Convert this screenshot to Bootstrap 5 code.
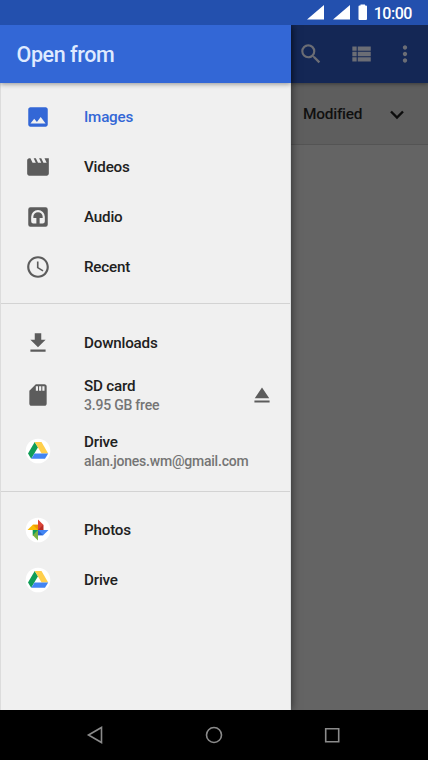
<!DOCTYPE html>
<html lang="en">
<head>
<meta charset="utf-8">
<meta name="viewport" content="width=device-width, initial-scale=1">
<title>Open from</title>
<link href="https://cdn.jsdelivr.net/npm/bootstrap@5.3.0/dist/css/bootstrap.min.css" rel="stylesheet">
<style>
body{font-family:Roboto,"Liberation Sans",sans-serif;color:#212121;background:#000}
.screen{width:428px;height:760px}
.statusbar{height:25px;background:#2350ae;color:#fff;font-size:16px;letter-spacing:-.45px;font-weight:500;padding-right:16px}
.clock{padding-top:2px}
.drawer{width:291px;background:#f0f0f0;box-shadow:0 0 9px rgba(0,0,0,.6);z-index:2;border-right:1px solid #dcdfe0}
.drawer-title{height:58px;width:291px;background:#3367d6;color:#dfeaff;font-size:21.500px;letter-spacing:-.42px;font-weight:500;padding-left:16.5px;padding-top:2px;box-shadow:0 1px 5px rgba(0,0,0,.4);z-index:1}
.drawer-body{border-left:1px solid #dcdcdc}
.entries{padding:9px 0 11px}
.entries+.entries{border-top:1px solid #d3d3d3;padding-top:14px;padding-bottom:12px}
.entries+.entries+.entries{padding-top:13px}
.entry{height:50px;padding-left:24px;font-size:15.2px;letter-spacing:-.2px;font-weight:500;line-height:20px;color:#212121}
.entry.short{height:49px}
.entry.tall{height:56px}
.entry.chosen{color:#3367d6}
.entry.chosen .glyph{fill:#3367d6}
.glyph{width:26px;height:26px;fill:#5c5c5c;margin-right:33px;flex:none}
.detail{font-size:14px;letter-spacing:-.22px;font-weight:500;line-height:19px;color:#757575}
.eject{width:26px;height:26px;fill:#5c5c5c;margin-right:15px}
.backdrop-bar{height:58px;background:#142755;box-shadow:0 1px 4px rgba(0,0,0,.4);z-index:1;padding-left:7px}
.backdrop-bar svg{fill:#6b6d75}
.overflow-dots{margin-left:17px}
.sortbar{height:62px;background:#5e5e5e;border-bottom:1px solid #545454;font-size:15.4px;letter-spacing:-.22px;font-weight:500;color:#101010;padding-left:12px;padding-top:3px}
.behind{background:#646464}
.navkeys{height:50px;background:#000}
.navkeys svg{fill:none;stroke:#8b8b8b;stroke-width:1.6}
</style>
<script src="https://cdn.jsdelivr.net/npm/bootstrap@5.3.0/dist/js/bootstrap.bundle.min.js"></script>
</head>
<body class="overflow-hidden">
<svg class="d-none">
<symbol id="drive" viewBox="0 0 26 26"><circle cx="13" cy="13" r="12.3" fill="#fff"/><path fill="#109d58" d="M9.7 4L3 15.600l3.200 5.100L13 9.300z"/><path fill="#ffcf4b" d="M9.700 4h6.800l6.700 11.400h-6.600z"/><path fill="#4285f4" d="M6.200 20.700l3.400-5.300h13.600l-3.200 5.300z"/></symbol>
</svg>
<div class="screen d-flex flex-column overflow-hidden">
  <div class="statusbar d-flex align-items-center justify-content-end">
    <svg width="63" height="25" viewBox="0 0 63 25" fill="#fff"><path d="M0 19.500L17 5v14.500zM26 19.500L43 5v14.500zM51.500 6.500a1 1 0 0 1 1-1h1V4.500h4.500v1h1a1 1 0 0 1 1 1V19a1 1 0 0 1-1 1H52.500a1 1 0 0 1-1-1z"/></svg>
    <span class="clock ms-1 lh-1">10:00</span>
  </div>
  <main class="d-flex flex-grow-1 overflow-hidden">
    <aside class="drawer d-flex flex-column position-relative flex-shrink-0">
      <header class="drawer-title d-flex align-items-center position-relative">Open from</header>
      <div class="drawer-body flex-grow-1">
        <div class="entries">
          <div class="entry chosen d-flex align-items-center"><svg class="glyph" viewBox="0 0 24 24"><path d="M21 19V5c0-1.100-.9-2-2-2H5c-1.100 0-2 .9-2 2v14c0 1.100.9 2 2 2h14c1.100 0 2-.9 2-2zM8.500 13.500l2.500 3.010L14.500 12l4.500 6H5l3.500-4.500z"/></svg>Images</div>
          <div class="entry d-flex align-items-center"><svg class="glyph" viewBox="0 0 24 24"><path d="M18 4l2 4h-3l-2-4h-2l2 4h-3l-2-4H8l2 4H7L5 4H4c-1.100 0-2 .9-2 2v12c0 1.100.9 2 2 2h16c1.100 0 2-.9 2-2V4h-4z"/></svg>Videos</div>
          <div class="entry d-flex align-items-center"><svg class="glyph" viewBox="0 0 24 24"><path fill-rule="evenodd" d="M5 3h14a2 2 0 0 1 2 2v14a2 2 0 0 1-2 2H5a2 2 0 0 1-2-2V5a2 2 0 0 1 2-2zM12 5.500a6.300 6.300 0 0 0-6.300 6.300V16a2 2 0 0 0 2 2H10.500v-5H7.700v-1.200a4.300 4.300 0 0 1 8.600 0V13H13.500v5h2.800a2 2 0 0 0 2-2v-4.200A6.300 6.300 0 0 0 12 5.500z"/></svg>Audio</div>
          <div class="entry d-flex align-items-center"><svg class="glyph" viewBox="0 0 24 24"><path d="M11.990 2C6.470 2 2 6.480 2 12s4.470 10 9.990 10C17.520 22 22 17.520 22 12S17.520 2 11.990 2zM12 20c-4.420 0-8-3.580-8-8s3.580-8 8-8 8 3.580 8 8-3.580 8-8 8zM12.500 7H11v6l5.250 3.150.75-1.230-4.500-2.670z"/></svg>Recent</div>
        </div>
        <div class="entries">
          <div class="entry short d-flex align-items-center"><svg class="glyph" viewBox="0 0 24 24"><path d="M19 9h-4V3H9v6H5l7 7 7-7zM5 18v2h14v-2H5z"/></svg>Downloads</div>
          <div class="entry tall d-flex align-items-center"><svg class="glyph" viewBox="0 0 24 24"><path d="M18 2h-8L4.020 8 4 20c0 1.100.9 2 2 2h12c1.100 0 2-.9 2-2V4c0-1.100-.9-2-2-2zm-6 6h-2V4h2v4zm3 0h-2V4h2v4zm3 0h-2V4h2v4z"/></svg>
            <div class="flex-grow-1">SD card<div class="detail">3.95 GB free</div></div>
            <svg class="eject" viewBox="0 0 24 24"><path d="M5 17h14v2H5zM12 5L5.330 15h13.340z"/></svg></div>
          <div class="entry tall d-flex align-items-center"><svg class="glyph"><use href="#drive"/></svg><div>Drive<div class="detail">alan.jones.wm@gmail.com</div></div></div>
        </div>
        <div class="entries">
          <div class="entry d-flex align-items-center"><svg class="glyph" viewBox="0 0 26 26"><circle cx="13" cy="13" r="12.300" fill="#fff"/><path fill="#db4437" d="M13 2.500l5.300 5.300V13H13z"/><path fill="#b72b24" d="M13 13l5.300-5.200V13z"/><path fill="#4285f4" d="M13 13h10.500l-5.300 5.200H13z"/><path fill="#2a62c9" d="M13 13l5.200 5.200H13z"/><path fill="#7cb342" d="M13 13v10.500l-5.200-5.300V13z"/><path fill="#0f9d58" d="M13 13l-5.200 5.200V13z"/><path fill="#fbbc05" d="M13 13H2.500l5.300-5.200H13z"/><path fill="#f29900" d="M13 13L7.800 7.800H13z"/></svg>Photos</div>
          <div class="entry d-flex align-items-center"><svg class="glyph"><use href="#drive"/></svg>Drive</div>
        </div>
      </div>
    </aside>
    <section class="behind flex-grow-1 d-flex flex-column">
      <div class="backdrop-bar d-flex align-items-center position-relative">
        <svg width="26" height="26" viewBox="0 0 24 24"><path d="M15.500 14h-.79l-.28-.27A6.470 6.470 0 0 0 16 9.500 6.500 6.500 0 1 0 9.500 16c1.610 0 3.090-.59 4.230-1.570l.27.280v.79l5 4.990L20.490 19l-4.990-5zm-6 0C7.010 14 5 11.990 5 9.500S7.010 5 9.500 5 14 7.010 14 9.500 11.990 14 9.500 14z"/></svg>
        <svg class="ms-4" width="26" height="26" viewBox="0 0 24 24"><path d="M4 14h4v-4H4v4zm0 5h4v-4H4v4zM4 9h4V5H4v4zm5 5h12v-4H9v4zm0 5h12v-4H9v4zM9 5v4h12V5H9z"/></svg>
        <svg class="overflow-dots" width="28" height="26" viewBox="0 0 24 24"><path d="M12 8c1.100 0 2-.9 2-2s-.9-2-2-2-2 .9-2 2 .9 2 2 2zm0 2c-1.100 0-2 .9-2 2s.9 2 2 2 2-.9 2-2-.9-2-2-2zm0 6c-1.100 0-2 .9-2 2s.9 2 2 2 2-.9 2-2-.9-2-2-2z"/></svg>
      </div>
      <div class="sortbar d-flex align-items-center"><span>Modified</span><svg class="ms-4" width="22" height="22" viewBox="0 0 22 22" fill="none" stroke="#0c0c0c" stroke-width="2.400"><path d="M5 7.500l6 6 6-6"/></svg></div>
    </section>
  </main>
  <nav class="navkeys d-flex align-items-center justify-content-center flex-shrink-0">
    <svg width="356" height="24" viewBox="0 0 356 24"><path d="M52.500 12L65.500 4.500v15z"/><circle cx="178" cy="12" r="7.500"/><path d="M289.700 5.700h13v13h-13z"/></svg>
  </nav>
</div>
</body>
</html>
